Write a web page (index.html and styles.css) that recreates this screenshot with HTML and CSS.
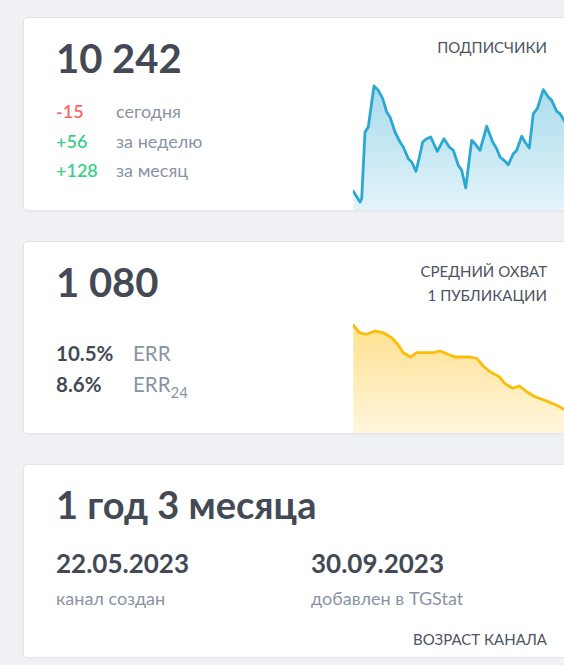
FILE: index.html
```html
<!DOCTYPE html>
<html lang="ru">
<head>
<meta charset="utf-8">
<link rel="stylesheet" href="styles.css">
</head>
<body>
<main class="page">
  <section class="card chart-card">
    <div class="stats">
      <div class="big">10 242</div>
      <div class="deltas">
        <div class="row"><span class="val neg">-15</span><span class="lbl">сегодня</span></div>
        <div class="row"><span class="val pos">+56</span><span class="lbl">за неделю</span></div>
        <div class="row"><span class="val pos">+128</span><span class="lbl">за месяц</span></div>
      </div>
    </div>
    <div class="side">
      <div class="title">ПОДПИСЧИКИ</div>
      <svg class="chart chart-blue" viewBox="0 0 226 126" preserveAspectRatio="none">
        <defs>
          <linearGradient id="gb" x1="0" y1="0" x2="0" y2="1">
            <stop offset="0" stop-color="#a9dbeb"/>
            <stop offset="1" stop-color="#e3f4fa"/>
          </linearGradient>
        </defs>
        <path fill="url(#gb)" d="M0.3,126 L0.3,107.3 L7,118 L8.7,114.7 L12,48 L15.3,43 L21,2 L25.3,6.3 L29.7,14.7 L33.7,28 L37,33 L42,48 L47,58 L50.3,63 L55.3,74.7 L58.7,78 L63,87.3 L66,74.7 L69.7,58 L73.7,54.7 L77.7,53 L84.3,67.3 L91,54.7 L96.3,63 L100.3,66.3 L105.3,81.3 L108.7,86.3 L112.7,104 L118.7,56.3 L122,59.7 L127,66.3 L133.7,42.3 L139.7,58 L143.7,64.7 L147,73 L151,76.3 L155.3,80.7 L160.3,69.7 L163.7,66.3 L168.7,52.3 L172,58 L176.3,64 L180.3,29.7 L184.3,24.7 L190.3,5.7 L195.3,13 L198.7,16.3 L203.7,27.3 L207,29.7 L211,36.3 L218,44 L226,50 L226,126 Z"/>
        <polyline fill="none" stroke="#2ba8d1" stroke-width="2.8" stroke-linejoin="round" stroke-linecap="round" points="0.3,107.3 7,118 8.7,114.7 12,48 15.3,43 21,2 25.3,6.3 29.7,14.7 33.7,28 37,33 42,48 47,58 50.3,63 55.3,74.7 58.7,78 63,87.3 66,74.7 69.7,58 73.7,54.7 77.7,53 84.3,67.3 91,54.7 96.3,63 100.3,66.3 105.3,81.3 108.7,86.3 112.7,104 118.7,56.3 122,59.7 127,66.3 133.7,42.3 139.7,58 143.7,64.7 147,73 151,76.3 155.3,80.7 160.3,69.7 163.7,66.3 168.7,52.3 172,58 176.3,64 180.3,29.7 184.3,24.7 190.3,5.7 195.3,13 198.7,16.3 203.7,27.3 207,29.7 211,36.3 218,44 226,50"/>
      </svg>
    </div>
  </section>

  <section class="card chart-card">
    <div class="stats">
      <div class="big">1 080</div>
      <div class="errs">
        <div class="row"><span class="val dark">10.5%</span><span class="lbl">ERR</span></div>
        <div class="row"><span class="val dark">8.6%</span><span class="lbl">ERR<sub>24</sub></span></div>
      </div>
    </div>
    <div class="side">
      <div class="title">СРЕДНИЙ ОХВАТ<br>1 ПУБЛИКАЦИИ</div>
      <svg class="chart chart-yellow" viewBox="0 0 226 110" preserveAspectRatio="none">
        <defs>
          <linearGradient id="gy" x1="0" y1="0" x2="0" y2="1">
            <stop offset="0" stop-color="#ffe08e"/>
            <stop offset="1" stop-color="#fff6dd"/>
          </linearGradient>
        </defs>
        <path fill="url(#gy)" d="M0.3,110 L0.3,2 L6.3,9.7 L13.7,11.3 L22,8 L30.3,9.7 L38.7,14.7 L45.3,22 L50.3,29.7 L57.7,34 L63.7,29.7 L80.3,29.7 L87,28 L93.7,30.7 L102,34 L117,34 L123.7,35.3 L130.3,43 L137,48.7 L146.3,53.7 L152,60.7 L159.7,65.3 L166.3,63 L173.7,68.7 L182,73.7 L193.7,78 L203.7,82.3 L211,86.3 L226,92 L226,110 Z"/>
        <polyline fill="none" stroke="#fbbd08" stroke-width="2.8" stroke-linejoin="round" stroke-linecap="round" points="0.3,2 6.3,9.7 13.7,11.3 22,8 30.3,9.7 38.7,14.7 45.3,22 50.3,29.7 57.7,34 63.7,29.7 80.3,29.7 87,28 93.7,30.7 102,34 117,34 123.7,35.3 130.3,43 137,48.7 146.3,53.7 152,60.7 159.7,65.3 166.3,63 173.7,68.7 182,73.7 193.7,78 203.7,82.3 211,86.3 226,92"/>
      </svg>
    </div>
  </section>

  <section class="card age-card">
    <div class="age">1 год 3 месяца</div>
    <div class="dates">
      <div class="date-col">
        <div class="date">22.05.2023</div>
        <div class="date-lbl">канал создан</div>
      </div>
      <div class="date-col">
        <div class="date">30.09.2023</div>
        <div class="date-lbl">добавлен в TGStat</div>
      </div>
    </div>
    <div class="title foot">ВОЗРАСТ КАНАЛА</div>
  </section>
</main>
</body>
</html>
```

FILE: styles.css
```css
html, body {
  margin: 0;
  padding: 0;
  overflow: hidden;
}
body {
  background: #f0f1f5;
  font-family: Lato, "Open Sans", sans-serif;
  color: #434a56;
}
.page {
  display: flex;
  flex-direction: column;
  gap: 30px;
  padding: 17px 0 0 23px;
  width: 557px;
}
.card {
  box-sizing: border-box;
  width: 557px;
  height: 193.5px;
  background: #fff;
  border: 1px solid #e3e5ea;
  border-radius: 4px;
  box-shadow: 0 1px 3px rgba(30, 40, 60, 0.03);
}
.chart-card {
  display: flex;
  padding-left: 32px;
  overflow: hidden;
}
.stats {
  flex: 1;
  display: flex;
  flex-direction: column;
}
.big {
  font-size: 40px;
  font-weight: 700;
  line-height: 48px;
  margin-top: 16px;
}
.deltas {
  margin-top: 15px;
}
.row {
  display: flex;
  font-size: 18px;
  line-height: 29.5px;
}
.val {
  width: 60px;
  font-weight: 600;
}
.neg { color: #fd6565; }
.pos { color: #3ccd8c; }
.lbl { color: #8a93a4; }
.errs {
  margin-top: 32px;
}
.errs .row {
  line-height: 31px;
  font-size: 20.5px;
}
.errs .val {
  width: 77px;
  font-weight: 700;
}
sub {
  font-size: 15px;
  vertical-align: -6px;
  line-height: 0;
}
.side {
  width: 226px;
  display: flex;
  flex-direction: column;
}
.title {
  font-size: 15px;
  line-height: 24px;
  color: #4d5462;
  text-align: right;
  padding: 17px 32px 0 0;
}
.chart {
  display: block;
  margin-top: auto;
  width: 226px;
}
.chart-blue { height: 126px; }
.chart-yellow { height: 110px; }
.age-card {
  display: flex;
  flex-direction: column;
  padding: 0 32px;
}
.age {
  font-size: 38px;
  font-weight: 700;
  line-height: 46px;
  margin-top: 16px;
}
.dates {
  display: grid;
  grid-template-columns: 255px 1fr;
  margin-top: 19px;
}
.date {
  font-size: 26px;
  font-weight: 700;
  line-height: 34px;
}
.date-lbl {
  font-size: 18px;
  line-height: 24px;
  color: #8a93a4;
  margin-top: 6px;
}
.title.foot {
  margin-top: auto;
  padding: 0 0 6px 0;
}
```
